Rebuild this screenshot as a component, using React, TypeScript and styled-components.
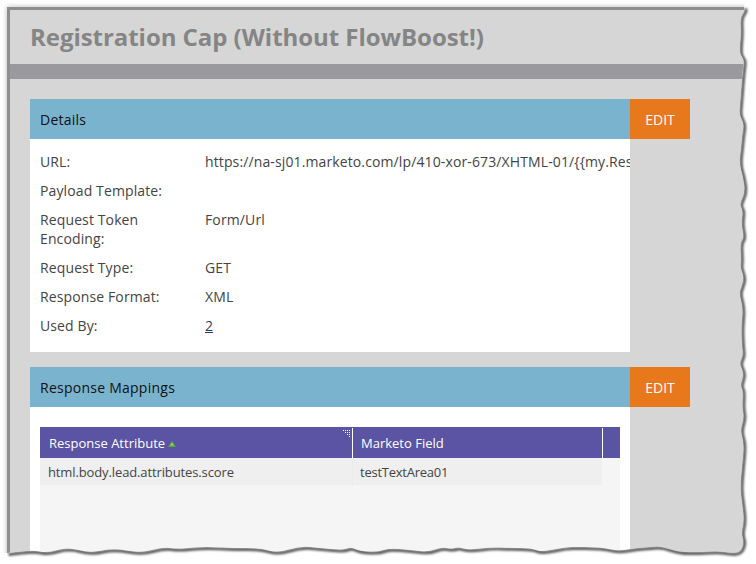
import React from "react";
import styled, { createGlobalStyle } from "styled-components";

const Global = createGlobalStyle`
  html, body { margin: 0; padding: 0; background: #fff; }
  body { font-family: "Open Sans", "Liberation Sans", sans-serif; }
`;

const Viewport = styled.div`
  position: relative;
  width: 756px;
  height: 564px;
  overflow: hidden;
  background: #fff;
  padding: 7px 0 0 7px;
  box-sizing: border-box;
`;

const Sheet = styled.div`
  width: 760px;
  height: 560px;
  box-sizing: border-box;
  border-top: 3px solid #8e8e8e;
  border-left: 3px solid #8e8e8e;
  background: #d6d6d6;
  box-shadow: 0 0 5px rgba(0, 0, 0, 0.3);
`;

const TitleBar = styled.div`
  height: 54px;
  padding-left: 20px;
  display: flex;
  align-items: center;
`;

const Title = styled.h1`
  margin: 0;
  font-size: 24px;
  font-weight: 700;
  color: #858585;
  line-height: 54px;
  letter-spacing: -0.05px;
`;

const Divider = styled.div`
  height: 15px;
  background: #9a999d;
`;

const Content = styled.div`
  padding: 20px 0 0 20px;
  display: flex;
  flex-direction: column;
  gap: 15px;
`;

const Panel = styled.section`
  display: grid;
  grid-template-columns: 600px 60px;
  grid-template-rows: 40px auto;
`;

const PanelHeader = styled.div`
  background: #7ab3ce;
  color: #111;
  font-size: 14px;
  line-height: 42px;
  height: 40px;
  padding-left: 10px;
  letter-spacing: 0.25px;
  overflow: hidden;
`;

const EditButton = styled.button`
  border: 0;
  padding: 0;
  background: #e8781c;
  color: #fff;
  font: 400 14px "Open Sans", sans-serif;
`;

const PanelBody = styled.div<{ $pad: string }>`
  grid-column: 1;
  background: #fff;
  padding: ${(p) => p.$pad};
  overflow: hidden;
`;

const DetailGrid = styled.div`
  display: grid;
  grid-template-columns: 165px 425px;
  row-gap: 10px;
  font-size: 14px;
  line-height: 19px;
  color: #444;
  letter-spacing: 0.12px;
`;

const Label = styled.div`
  width: 130px;
`;

const Value = styled.div`
  white-space: nowrap;
  overflow: hidden;
`;

const ValueLink = styled.a`
  color: #333a5c;
  text-decoration: underline;
`;

const Table = styled.div`
  width: 580px;
  height: 200px;
  background: #f5f5f5;
`;

const HeadRow = styled.div`
  display: grid;
  grid-template-columns: 312px 1px 249px 1px 17px;
  height: 31px;
  background: #5b53a3;
  color: #fff;
  font-size: 13px;
  line-height: 33px;
`;

const HeadCell = styled.div<{ $inset: number }>`
  position: relative;
  padding-left: ${(p) => p.$inset}px;
  display: flex;
  align-items: center;
  gap: 3px;
`;

const HeadRule = styled.div`
  background: #fff;
  margin-top: 1px;
`;

const SortMark = styled.svg`
  margin-top: 1px;
`;

const Grip = styled.svg`
  position: absolute;
  right: 1px;
  top: 3px;
`;

const DataRow = styled.div`
  width: 562px;
  display: grid;
  grid-template-columns: 312px 1px 249px;
  height: 27px;
  background: #efefef;
  color: #444;
  font-size: 13px;
  line-height: 28px;
  letter-spacing: -0.12px;
`;

const DataCell = styled.div<{ $inset: number; $track?: number }>`
  padding-left: ${(p) => p.$inset}px;
  letter-spacing: ${(p) => p.$track ?? -0.12}px;
`;

const DataRule = styled.div`
  background: #ebebeb;
`;

const TornEdge = styled.svg`
  position: absolute;
  left: 0;
  top: 0;
`;

const right: [number, number][] = [
  [744,7],[745,10],[740,17],[741,33],[739,53],[744,59],[743,68],[742,77],[741,90],[740,103],[739,115],[744,123],[742,135],[741,147],[739,163],[743,177],[745,192],[739,204],[743,210],[741,223],[744,237],[740,242],[741,260],[740,267],[744,277],[741,287],[739,293],[743,308],[741,327],[742,347],[743,355],[739,363],[744,373],[740,385],[743,390],[742,407],[744,417],[740,430],[744,443],[742,465],[740,487],[742,503],[744,520],[741,533],[744,542],[740,552]
];
const bottom: [number, number][] = [
  [731,553],[718,551],[698,552],[678,552],[661,546],[650,547],[635,548],[618,551],[605,548],[591,547],[578,547],[565,547],[541,552],[531,548],[511,548],[491,547],[468,550],[458,547],[451,549],[441,547],[428,552],[411,550],[388,548],[378,552],[360,551],[350,547],[343,550],[320,548],[300,546],[277,553],[260,548],[233,548],[213,547],[200,547],[177,549],[163,547],[140,553],[113,548],[90,553],[67,547],[47,553],[33,550],[7,553]
];
const all = [...right, ...bottom];
const curve = all
  .slice(1)
  .map(([x, y], i) => {
    const [px, py] = all[i];
    return `Q${px} ${py} ${(px + x) / 2} ${(py + y) / 2}`;
  })
  .join(" ");
const outline = `M${all[0][0]} ${all[0][1]} ${curve} L7 553`;
const mask = `M0 0H756V564H0Z M0 0 L745 0 L${all[0][0]} ${all[0][1]} ${curve} L7 553 L0 553 Z`;

export default function App() {
  return (
    <Viewport>
      <Global />
      <Sheet>
        <TitleBar>
          <Title>Registration Cap (Without FlowBoost!)</Title>
        </TitleBar>
        <Divider />
        <Content>
          <Panel>
            <PanelHeader>Details</PanelHeader>
            <EditButton>EDIT</EditButton>
            <PanelBody $pad="13px 0 17px 10px">
              <DetailGrid>
                <Label>URL:</Label>
                <Value>https://na-sj01.marketo.com/lp/410-xor-673/XHTML-01/{"{{my.ResponseURL}}"}</Value>
                <Label>Payload Template:</Label>
                <Value />
                <Label>Request Token Encoding:</Label>
                <Value>Form/Url</Value>
                <Label>Request Type:</Label>
                <Value>GET</Value>
                <Label>Response Format:</Label>
                <Value>XML</Value>
                <Label>Used By:</Label>
                <Value><ValueLink href="#">2</ValueLink></Value>
              </DetailGrid>
            </PanelBody>
          </Panel>
          <Panel>
            <PanelHeader>Response Mappings</PanelHeader>
            <EditButton>EDIT</EditButton>
            <PanelBody $pad="20px 10px 0">
              <Table>
                <HeadRow>
                  <HeadCell $inset={9}>
                    Response Attribute
                    <SortMark width="8" height="6" viewBox="0 0 8 6">
                      <path d="M4 0 L8 6 H0 Z" fill="#5aa63a" />
                      <path d="M4 1.5 L6 4.5 H2 Z" fill="#9ad36e" />
                    </SortMark>
                    <Grip width="9" height="8" viewBox="0 0 9 8" fill="#fff">
                      <path d="M1 0h1v1H1zM3 0h1v1H3zM5 0h1v1H5zM7 0h1v1H7zM3 2h1v1H3zM5 2h1v1H5zM7 2h1v1H7zM5 4h1v1H5zM7 4h1v1H7zM7 6h1v1H7z" />
                    </Grip>
                  </HeadCell>
                  <HeadRule />
                  <HeadCell $inset={8}>Marketo Field</HeadCell>
                  <HeadRule />
                  <div />
                </HeadRow>
                <DataRow>
                  <DataCell $inset={8}>html.body.lead.attributes.score</DataCell>
                  <DataRule />
                  <DataCell $inset={7} $track={-0.25}>testTextArea01</DataCell>
                </DataRow>
              </Table>
            </PanelBody>
          </Panel>
        </Content>
      </Sheet>
      <TornEdge width="756" height="564" viewBox="0 0 756 564">
        <defs>
          <filter id="soft" x="-5%" y="-5%" width="110%" height="110%">
            <feGaussianBlur stdDeviation="1.3" />
          </filter>
          <clipPath id="outside">
            <path d={mask} clipRule="evenodd" />
          </clipPath>
        </defs>
        <path d={mask} fill="#fff" fillRule="evenodd" />
        <g clipPath="url(#outside)">
          <path d={outline} transform="translate(1.5 1.5)" fill="none" stroke="#555" strokeWidth="3" filter="url(#soft)" />
        </g>
      </TornEdge>
    </Viewport>
  );
}
